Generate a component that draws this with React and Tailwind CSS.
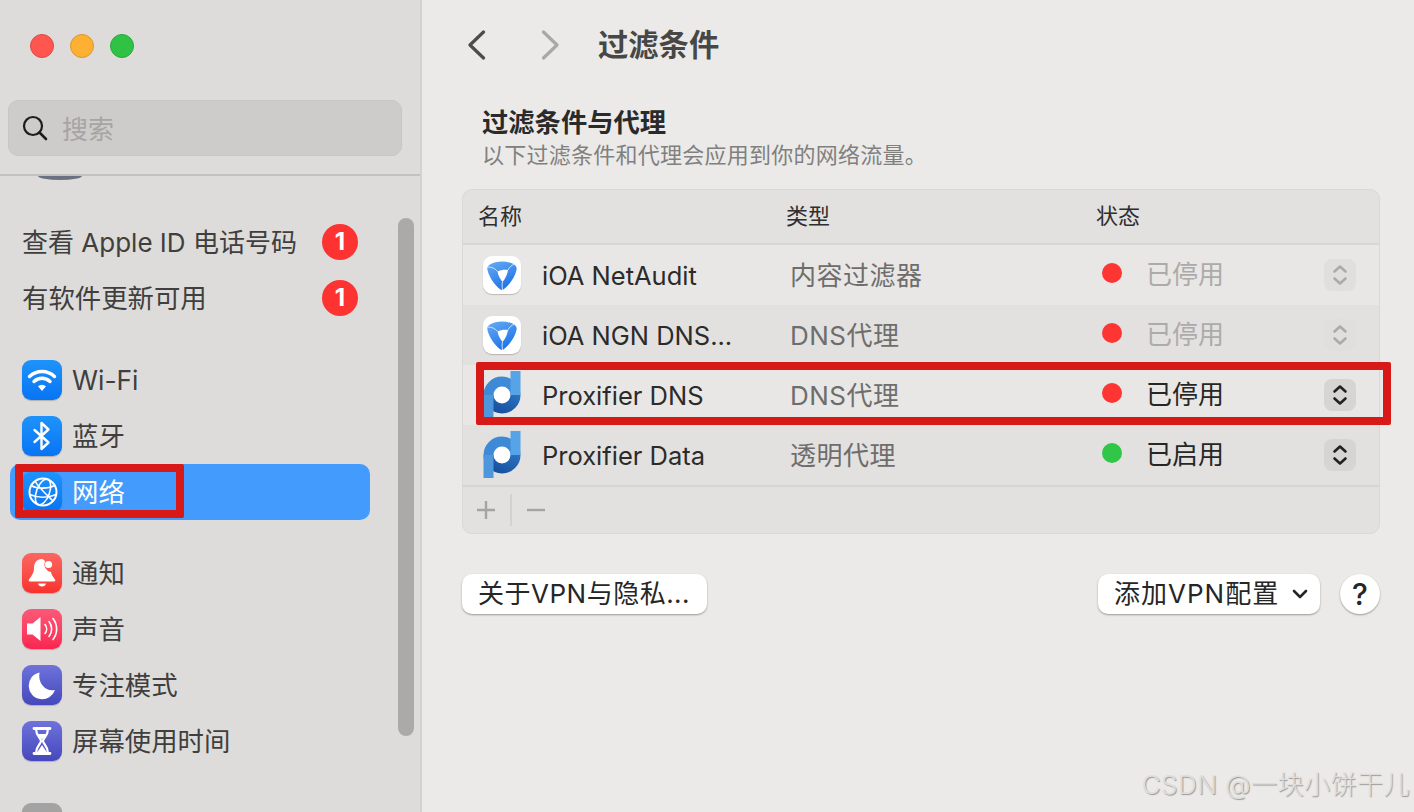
import * as React from 'react'

const FONT = "font-['Inter','Noto_Sans_CJK_SC',sans-serif]"

const WifiIcon = () => (
  <svg viewBox="0 0 40 40" className="size-10">
    <path d="M7.5 16.5a18 18 0 0 1 25 0M12 21.5a11.5 11.5 0 0 1 16 0" fill="none" stroke="white" strokeWidth="3.4" strokeLinecap="round" />
    <path d="M16 26.2a6 6 0 0 1 8 0L20 31z" fill="white" />
  </svg>
)

const BluetoothIcon = () => (
  <svg viewBox="0 0 40 40" className="size-10">
    <path d="M12.5 14l14 12.5L19.5 33V7l7 6.5L12.5 26" fill="none" stroke="white" strokeWidth="2.4" strokeLinejoin="round" strokeLinecap="round" />
  </svg>
)

const GlobeIcon = () => (
  <svg viewBox="0 0 40 40" className="size-10" fill="none" stroke="white" strokeWidth="1.6">
    <circle cx="21" cy="20" r="13.5" strokeWidth="2" />
    <ellipse cx="21" cy="20" rx="6.5" ry="13.5" transform="rotate(20 21 20)" />
    <path d="M9 13.5c6 3.5 17 3.5 23.5 0M7.8 22.5c8 3.5 18 3.5 26.4 0M13 9c3 6 12 14 18 20" />
  </svg>
)

const BellIcon = () => (
  <svg viewBox="0 0 40 40" className="size-10" fill="white">
    <path d="M20 6c-5.500 0-8 4-8 9 0 6-3.500 9-5 11.500-.7 1.200 0 2 1 2h24c1.200 0 1.800-.9 1-2-1.500-2.300-3.800-4.500-4-7.500a8 8 0 0 1-6-11C22 7 21 6 20 6z" />
    <path d="M16 30.500h8c-.5 2-2 3-4 3s-3.500-1-4-3z" />
    <circle cx="26.500" cy="11.500" r="3.600" />
  </svg>
)

const SoundIcon = () => (
  <svg viewBox="0 0 40 40" className="size-10">
    <path d="M5 14.500h5.500L18.500 8v24l-8-6.500H5z" fill="white" />
    <path d="M23 15.500a7 7 0 0 1 0 9M27 12.500a12 12 0 0 1 0 15M31 9.500a17 17 0 0 1 0 21" fill="none" stroke="white" strokeWidth="1.600" strokeLinecap="round" />
  </svg>
)

const MoonIcon = () => (
  <svg viewBox="0 0 40 40" className="size-10">
    <path d="M17.500 7.500a13.500 13.500 0 1 0 15.500 17.500c-8.500 2-17.500-6-15.500-17.500z" fill="white" />
  </svg>
)

const HourglassIcon = () => (
  <svg viewBox="0 0 40 40" className="size-10" fill="none" stroke="white" strokeWidth="2.200" strokeLinecap="round">
    <path d="M12 7.500h16M12 32.500h16" strokeWidth="2.800" />
    <path d="M14 8c0 7 5 9 5 12s-5 5-5 12M26 8c0 7-5 9-5 12s5 5 5 12" />
    <path d="M15.500 13h9L20 18.500zM20 24l-5 7.500h10z" fill="white" stroke="none" />
  </svg>
)

const GearStub = () => <div className="size-10 rounded-[9px] bg-[#a3a3a3] shadow-[0_1px_1px_rgba(0,0,0,0.2)]" />

const IOALogo = ({ id }) => (
  <div className="flex size-[38px] shrink-0 items-center justify-center rounded-[9px] bg-white shadow-[0_1px_1px_rgba(0,0,0,0.2)]">
    <svg viewBox="0 0 38 38" className="size-[38px]">
      <defs>
        <linearGradient id={id} x1="0.1" y1="0" x2="0.6" y2="1">
          <stop offset="0" stopColor="#64aaf4" />
          <stop offset="1" stopColor="#1b72e8" />
        </linearGradient>
      </defs>
      <path d="M7 8.500C13 4.500 25 4.500 31 8.500c2.500 1.700 3 3.500 2.500 5.500-1.500 7-7 15-13 19.500-.8.600-2 .600-3 0-6-4.500-11.500-12.500-13-19.500C4 12 4.500 10.200 7 8.500z" fill={`url(#${id})`} />
      <path d="M14.500 15.500c3-1.500 7-2 10.500-1.500-.5 3.500-2 8-5.500 12-2.500-3-4.500-7-5-10.500z" fill="white" />
      <path d="M5 11c3.500 0 7.500 1.500 9.500 4.500M25 14c1-2.500 3.500-5 7-6M19.500 26c-.5 2-.5 5 0 8" stroke="#cfe4ff" strokeWidth="1" fill="none" />
    </svg>
  </div>
)

const ProxifierLogo = ({ id }) => (
  <svg viewBox="0 0 38 48" className="h-12 w-[38px] shrink-0">
    <defs>
      <linearGradient id={id} x1="0" y1="1" x2="1" y2="0">
        <stop offset="0" stopColor="#174f9e" />
        <stop offset="1" stopColor="#2a70bf" />
      </linearGradient>
    </defs>
    <circle cx="19" cy="24" r="9" fill="white" />
    <path d="M32.500 24A13.500 13.500 0 0 1 5.500 24" fill="none" stroke={`url(#${id})`} strokeWidth="10" />
    <path d="M5.500 24A13.500 13.500 0 0 1 32.500 24" fill="none" stroke="#3f8ad6" strokeWidth="10" />
    <rect x="0.500" y="24" width="10" height="23" fill="#4e97dd" />
    <rect x="27.500" y="0" width="10" height="24" fill="#56a3e8" />
  </svg>
)

const Stepper = ({ disabled }) => (
  <div className={`flex size-8 items-center justify-center rounded-lg ${disabled ? 'bg-[#e0dfdd]' : 'bg-[#d6d5d3]'}`}>
    <svg viewBox="0 0 32 32" className="size-8" fill="none" stroke={disabled ? '#ababa9' : '#222222'} strokeWidth="2.600" strokeLinecap="round" strokeLinejoin="round">
      <path d="M10.500 12.500L16 7.500l5.500 5M10.500 19.500l5.500 5 5.500-5" />
    </svg>
  </div>
)

const NAV_GROUPS = [
  [
    { label: 'Wi-Fi', icon: <WifiIcon />, bg: 'bg-linear-to-b from-[#1f93fb] to-[#0874f4]' },
    { label: '蓝牙', icon: <BluetoothIcon />, bg: 'bg-linear-to-b from-[#1f93fb] to-[#0874f4]' },
    { label: '网络', icon: <GlobeIcon />, bg: 'bg-linear-to-b from-[#1f93fb] to-[#0874f4]', active: true },
  ],
  [
    { label: '通知', icon: <BellIcon />, bg: 'bg-linear-to-b from-[#fb6660] to-[#f9302c]' },
    { label: '声音', icon: <SoundIcon />, bg: 'bg-linear-to-b from-[#fb5878] to-[#fa2350]' },
    { label: '专注模式', icon: <MoonIcon />, bg: 'bg-linear-to-b from-[#6f72dc] to-[#4548bb]' },
    { label: '屏幕使用时间', icon: <HourglassIcon />, bg: 'bg-linear-to-b from-[#6f72dc] to-[#4548bb]' },
  ],
]

const ROWS = [
  { name: 'iOA NetAudit', type: '内容过滤器', status: '已停用', logo: 'ioa', bg: 'bg-[#e8e7e5]', off: true, dot: 'bg-[#fd3533]' },
  { name: 'iOA NGN DNS...', type: 'DNS代理', status: '已停用', logo: 'ioa', bg: 'bg-[#e2e1df]', off: true, dot: 'bg-[#fd3533]' },
  { name: 'Proxifier DNS', type: 'DNS代理', status: '已停用', logo: 'px', bg: 'bg-[#e8e7e5]', dot: 'bg-[#fd3533]', marked: true },
  { name: 'Proxifier Data', type: '透明代理', status: '已启用', logo: 'px', bg: 'bg-[#e2e1df]', dot: 'bg-[#30c748]' },
]

function Badge() {
  return (
    <span className="flex size-9 -translate-y-px items-center justify-center rounded-full bg-[#fd3331] text-[24px] leading-none font-bold text-white">1</span>
  )
}

function Sidebar() {
  return (
    <aside className="relative h-[812px] w-[422px] shrink-0 overflow-hidden border-r-2 border-[#d3d2d0] bg-[#dddcda]">
      <div className="flex h-[176px] flex-col border-b-2 border-[#c3c2c0] px-2">
        <div className="flex gap-4 pt-[34px] pl-[22px]">
          <span className="size-6 rounded-full border border-[#dd4a44] bg-[#ff5650]" />
          <span className="size-6 rounded-full border border-[#dd962f] bg-[#feb032]" />
          <span className="size-6 rounded-full border border-[#2aa83c] bg-[#2fc245]" />
        </div>
        <div className="mt-[42px] flex h-14 w-[394px] items-center gap-3.5 rounded-[10px] border border-[#c8c7c5] bg-[#cdccca] pl-[13px]">
          <svg viewBox="0 0 26 26" className="size-[26px]" fill="none" stroke="#1c1c1c" strokeWidth="2.200" strokeLinecap="round">
            <circle cx="11" cy="11" r="9" />
            <path d="M17.500 17.500L24 24" strokeWidth="2.600" />
          </svg>
          <span className="translate-y-px text-[26px] text-[#a6a5a3]">搜索</span>
        </div>
      </div>
      <div className="ml-[38px] h-1 w-11 rounded-[0_0_50%_50%/0_0_100%_100%] bg-[#6b7180]" />

      <div className="mt-[35px] pl-[22px] text-[#403f3e]">
        <div className="flex h-14 w-[336px] items-center justify-between text-[26px]">
          <span className="-translate-y-px">查看 Apple ID 电话号码</span>
          <Badge />
        </div>
        <div className="flex h-14 w-[336px] items-center justify-between text-[26.400px]">
          <span>有软件更新可用</span>
          <Badge />
        </div>
      </div>

      {NAV_GROUPS.map((group, i) => (
        <div key={i} className="mt-[25px] px-2.5">
          {group.map(item => (
            <div
              key={item.label}
              className={`flex h-14 w-[360px] items-center gap-2.5 rounded-[10px] pl-3 text-[26.400px] ${item.active ? 'bg-[#429bfd] text-white' : 'text-[#403f3e]'}`}
            >
              <div className={`size-10 shrink-0 rounded-[9px] shadow-[0_1px_1px_rgba(0,0,0,0.2)] ${item.bg}`}>{item.icon}</div>
              <span className="translate-y-px">{item.label}</span>
            </div>
          ))}
        </div>
      ))}
      <div className="mt-[34px] pl-[22px]">
        <GearStub />
      </div>

      <div className="absolute top-[218px] left-[398px] h-[518px] w-4 rounded-full bg-[#abaaa8]" />
      <div className="absolute top-[464px] left-[15px] h-[54px] w-[169px] rounded-[2px] border-8 border-[#d71a18]" />
    </aside>
  )
}

function FilterRow({ row, index }) {
  return (
    <div className={`relative flex h-[60px] items-center text-[26px] ${row.bg}`}>
      <div className="flex w-[327px] items-center pl-5">
        <div className="flex w-[38px] justify-center">
          {row.logo === 'ioa' ? <IOALogo id={`ioa-${index}`} /> : <ProxifierLogo id={`px-${index}`} />}
        </div>
        <span className="ml-[21px] translate-y-px text-[25.500px] text-[#2b2b2b]">{row.name}</span>
      </div>
      <span className="w-[312px] tracking-[0.5px] text-[#6e6d6c]">{row.type}</span>
      <span className={`size-5 -translate-y-0.5 rounded-full ${row.dot}`} />
      <span className={`ml-6 flex-1 -translate-y-px ${row.off ? 'text-[#acabaa]' : 'text-[#262626]'}`}>{row.status}</span>
      <div className="mr-[23px]">
        <Stepper disabled={row.off} />
      </div>
      {row.marked && (
        <div className="absolute -top-[3px] -right-3 left-[13px] h-[63px] rounded-[2px] border-8 border-[#d71a18]" />
      )}
    </div>
  )
}

function MainPane() {
  return (
    <main className="relative h-[812px] flex-1 overflow-hidden bg-[#ebeae8] pt-7">
      <div className="flex h-[34px] items-center pl-[45px]">
        <svg viewBox="0 0 20 30" className="h-[30px] w-5" fill="none" stroke="#4c4c4b" strokeWidth="3.200" strokeLinecap="round" strokeLinejoin="round">
          <path d="M16.500 2L3 15l13.500 13" />
        </svg>
        <svg viewBox="0 0 20 30" className="ml-[53px] h-[30px] w-5" fill="none" stroke="#a9a8a7" strokeWidth="3.200" strokeLinecap="round" strokeLinejoin="round">
          <path d="M3.500 2L17 15 3.500 28" />
        </svg>
        <h1 className="ml-[38px] text-[30.300px] leading-none font-bold text-[#474746]">过滤条件</h1>
      </div>

      <div className="ml-[60px] pt-[44px]">
        <h2 className="text-[26.300px] leading-[34px] font-bold text-[#2a2a2a]">过滤条件与代理</h2>
        <p className="text-[22px] leading-[30px] tracking-[0.25px] text-[#80807f]">以下过滤条件和代理会应用到你的网络流量。</p>
      </div>

      <section className="mt-[19px] ml-10 w-[918px] rounded-[10px] border border-[#d9d8d6] bg-[#e2e1df]">
        <div className="flex h-[55px] items-center border-b-2 border-[#d8d7d5] pl-[15px] text-[22px] text-[#2e2e2e]">
          <span className="w-[308px]">名称</span>
          <span className="w-[310px]">类型</span>
          <span>状态</span>
        </div>
        {ROWS.map((row, i) => (
          <FilterRow key={row.name} row={row} index={i} />
        ))}
        <div className="flex h-12 items-center border-t-2 border-[#d6d5d3] pl-3.5 text-[#a5a4a3]">
          <svg viewBox="0 0 18 18" className="size-[18px]" stroke="currentColor" strokeWidth="2.400">
            <path d="M9 0v18M0 9h18" />
          </svg>
          <span className="mx-[15px] h-8 w-0.5 bg-[#d3d2d0]" />
          <svg viewBox="0 0 18 18" className="size-[18px]" stroke="currentColor" strokeWidth="2.400">
            <path d="M0 9h18" />
          </svg>
        </div>
      </section>

      <div className="mt-10 ml-10 flex w-[918px] items-center text-[26px] text-[#262626]">
        <button className="flex h-10 w-[245px] items-center rounded-[10px] bg-white pl-4 tracking-[0.5px] shadow-[0_1px_2px_rgba(0,0,0,0.35)]">
          <span className="-translate-y-px">关于VPN与隐私...</span>
        </button>
        <button className="ml-auto flex h-10 w-[222px] items-center rounded-[10px] bg-white pl-4 shadow-[0_1px_2px_rgba(0,0,0,0.35)]">
          <span className="-translate-y-px tracking-[1px]">添加VPN配置</span>
          <svg viewBox="0 0 16 10" className="mr-3 ml-auto h-2.5 w-4" fill="none" stroke="#262626" strokeWidth="2.600" strokeLinecap="round" strokeLinejoin="round">
            <path d="M2 2l6 6 6-6" />
          </svg>
        </button>
        <button className="ml-5 flex size-10 items-center justify-center rounded-full bg-white text-[30px] font-medium shadow-[0_1px_2px_rgba(0,0,0,0.35)]">?</button>
      </div>

      <div className="absolute right-1 bottom-[10px] text-[26px] leading-[34px] font-light tracking-[0.5px] text-[#dfdedc] [text-shadow:1px_1px_1px_rgba(0,0,0,0.35)]">CSDN @一块小饼干儿</div>
    </main>
  )
}

export default function App() {
  return (
    <div className={`flex h-[812px] w-[1414px] overflow-hidden ${FONT}`}>
      <Sidebar />
      <MainPane />
    </div>
  )
}
